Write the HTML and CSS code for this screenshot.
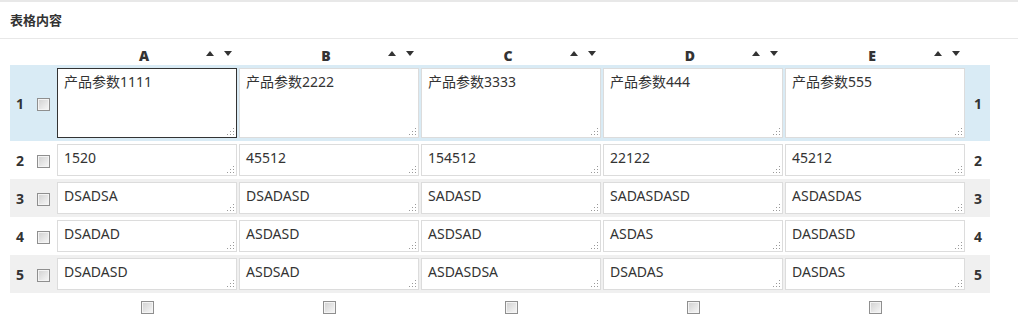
FILE: index.html
```html
<!DOCTYPE html>
<html lang="zh-CN">
    <head>
        <meta charset="utf-8">
        <meta name="viewport" content="width=device-width, initial-scale=1">
        <title>表格内容</title>
        <link rel="stylesheet" href="styles.css">
    </head>
    <body>
        <div class="panel">
            <div class="panel-title">表格内容</div>
            <div class="panel-body">
                <table class="grid">
                    <thead>
                        <tr>
                            <th class="num"></th>
                            <th class="chk"></th>
                            <th class="col"><div class="col-head"><span></span><b>A</b><span class="sort"><i class="up"></i><i class="down"></i></span></div></th>
                            <th class="col"><div class="col-head"><span></span><b>B</b><span class="sort"><i class="up"></i><i class="down"></i></span></div></th>
                            <th class="col"><div class="col-head"><span></span><b>C</b><span class="sort"><i class="up"></i><i class="down"></i></span></div></th>
                            <th class="col"><div class="col-head"><span></span><b>D</b><span class="sort"><i class="up"></i><i class="down"></i></span></div></th>
                            <th class="col"><div class="col-head"><span></span><b>E</b><span class="sort"><i class="up"></i><i class="down"></i></span></div></th>
                            <th class="num-r"></th>
                        </tr>
                    </thead>
                    <tbody>
                        <!-- la première ligne est plus haute et sélectionnée -->
                        <tr class="row-first">
                            <td class="num">1</td>
                            <td class="chk"><input type="checkbox"></td>
                            <td><textarea class="cell tall active">产品参数1111</textarea></td>
                            <td><textarea class="cell tall">产品参数2222</textarea></td>
                            <td><textarea class="cell tall">产品参数3333</textarea></td>
                            <td><textarea class="cell tall">产品参数444</textarea></td>
                            <td><textarea class="cell tall">产品参数555</textarea></td>
                            <td class="num-r">1</td>
                        </tr>
                        <tr>
                            <td class="num">2</td>
                            <td class="chk"><input type="checkbox"></td>
                            <td><textarea class="cell">1520</textarea></td>
                            <td><textarea class="cell">45512</textarea></td>
                            <td><textarea class="cell">154512</textarea></td>
                            <td><textarea class="cell">22122</textarea></td>
                            <td><textarea class="cell">45212</textarea></td>
                            <td class="num-r">2</td>
                        </tr>
                        <tr class="row-alt">
                            <td class="num">3</td>
                            <td class="chk"><input type="checkbox"></td>
                            <td><textarea class="cell">DSADSA</textarea></td>
                            <td><textarea class="cell">DSADASD</textarea></td>
                            <td><textarea class="cell">SADASD</textarea></td>
                            <td><textarea class="cell">SADASDASD</textarea></td>
                            <td><textarea class="cell">ASDASDAS</textarea></td>
                            <td class="num-r">3</td>
                        </tr>
                        <tr>
                            <td class="num">4</td>
                            <td class="chk"><input type="checkbox"></td>
                            <td><textarea class="cell">DSADAD</textarea></td>
                            <td><textarea class="cell">ASDASD</textarea></td>
                            <td><textarea class="cell">ASDSAD</textarea></td>
                            <td><textarea class="cell">ASDAS</textarea></td>
                            <td><textarea class="cell">DASDASD</textarea></td>
                            <td class="num-r">4</td>
                        </tr>
                        <tr class="row-alt">
                            <td class="num">5</td>
                            <td class="chk"><input type="checkbox"></td>
                            <td><textarea class="cell">DSADASD</textarea></td>
                            <td><textarea class="cell">ASDSAD</textarea></td>
                            <td><textarea class="cell">ASDASDSA</textarea></td>
                            <td><textarea class="cell">DSADAS</textarea></td>
                            <td><textarea class="cell">DASDAS</textarea></td>
                            <td class="num-r">5</td>
                        </tr>
                    </tbody>
                    <tfoot>
                        <tr>
                            <td class="num"></td>
                            <td class="chk"></td>
                            <td><input type="checkbox"></td>
                            <td><input type="checkbox"></td>
                            <td><input type="checkbox"></td>
                            <td><input type="checkbox"></td>
                            <td><input type="checkbox"></td>
                            <td class="num-r"></td>
                        </tr>
                    </tfoot>
                </table>
            </div>
        </div>
    </body>
</html>
```

FILE: styles.css
```css
body {
    margin: 0;
    font-family: "Noto Sans", "Noto Sans CJK SC", sans-serif;
    color: #333;
    background: #fff;
}
.panel {
    border-top: 2px solid #e8e8e8;
}
.panel-title {
    height: 36px;
    line-height: 36px;
    padding-left: 10px;
    font-size: 13px;
    font-weight: bold;
    border-bottom: 1px solid #e8e8e8;
}
.panel-body {
    padding: 0 10px;
}
.grid {
    border-collapse: collapse;
}
.grid td, .grid th {
    padding: 0;
}
.grid .num {
    width: 20px;
    text-align: center;
}
.grid .chk {
    width: 26px;
    text-align: center;
}
.grid .num-r {
    width: 24px;
    text-align: center;
}
.num, .num-r {
    font-size: 14px;
    font-weight: bold;
}
.col {
    width: 182px;
    height: 26px;
    vertical-align: bottom;
}
.col-head {
    display: grid;
    grid-template-columns: 1fr auto 1fr;
    height: 26px;
    padding-right: 6px;
}
.col-head b {
    font-size: 14px;
    line-height: 18px;
    padding-top: 8px;
}
.sort {
    justify-self: end;
    display: flex;
    gap: 10px;
    padding-top: 12px;
}
.sort i {
    display: block;
    width: 0;
    height: 0;
    border-left: 4px solid transparent;
    border-right: 4px solid transparent;
}
.sort .up {
    border-bottom: 5px solid #333;
}
.sort .down {
    border-top: 5px solid #333;
}
.grid tbody td {
    padding: 3px 1px;
}
.grid tbody td.num, .grid tbody td.chk, .grid tbody td.num-r {
    padding: 0;
}
.row-first {
    background: #d9ebf5;
}
.row-alt {
    background: #f0f0f0;
}
.cell {
    display: block;
    box-sizing: border-box;
    width: 180px;
    height: 32px;
    margin: 0;
    padding: 3px 6px;
    border: 1px solid #dcdcdc;
    font-family: "Noto Sans", "Noto Sans CJK SC", sans-serif;
    font-size: 14px;
    line-height: 20px;
    color: #333;
    resize: none;
    outline: none;
    overflow: hidden;
    /* petite poignée en pointillés en bas à droite */
    background:
        linear-gradient(#999, #999) right 2px bottom 2px / 1px 1px no-repeat,
        linear-gradient(#999, #999) right 5px bottom 2px / 1px 1px no-repeat,
        linear-gradient(#999, #999) right 8px bottom 2px / 1px 1px no-repeat,
        linear-gradient(#999, #999) right 2px bottom 5px / 1px 1px no-repeat,
        linear-gradient(#999, #999) right 5px bottom 5px / 1px 1px no-repeat,
        linear-gradient(#999, #999) right 2px bottom 8px / 1px 1px no-repeat,
        #fff;
}
.cell.tall {
    height: 70px;
}
.cell.active {
    border-color: #333;
}
input[type="checkbox"] {
    appearance: none;
    -webkit-appearance: none;
    display: inline-block;
    box-sizing: border-box;
    width: 13px;
    height: 13px;
    margin: 0;
    vertical-align: middle;
    border: 1px solid #8f8f8f;
    box-shadow: inset 0 0 0 1px #f4f4f4;
    background: linear-gradient(135deg, #d0d0d0, #f8f8f8);
}
.grid tfoot td {
    height: 22px;
    vertical-align: top;
    padding-top: 8px;
}
.grid tfoot input[type="checkbox"] {
    display: block;
    margin: 0 auto;
}
```
